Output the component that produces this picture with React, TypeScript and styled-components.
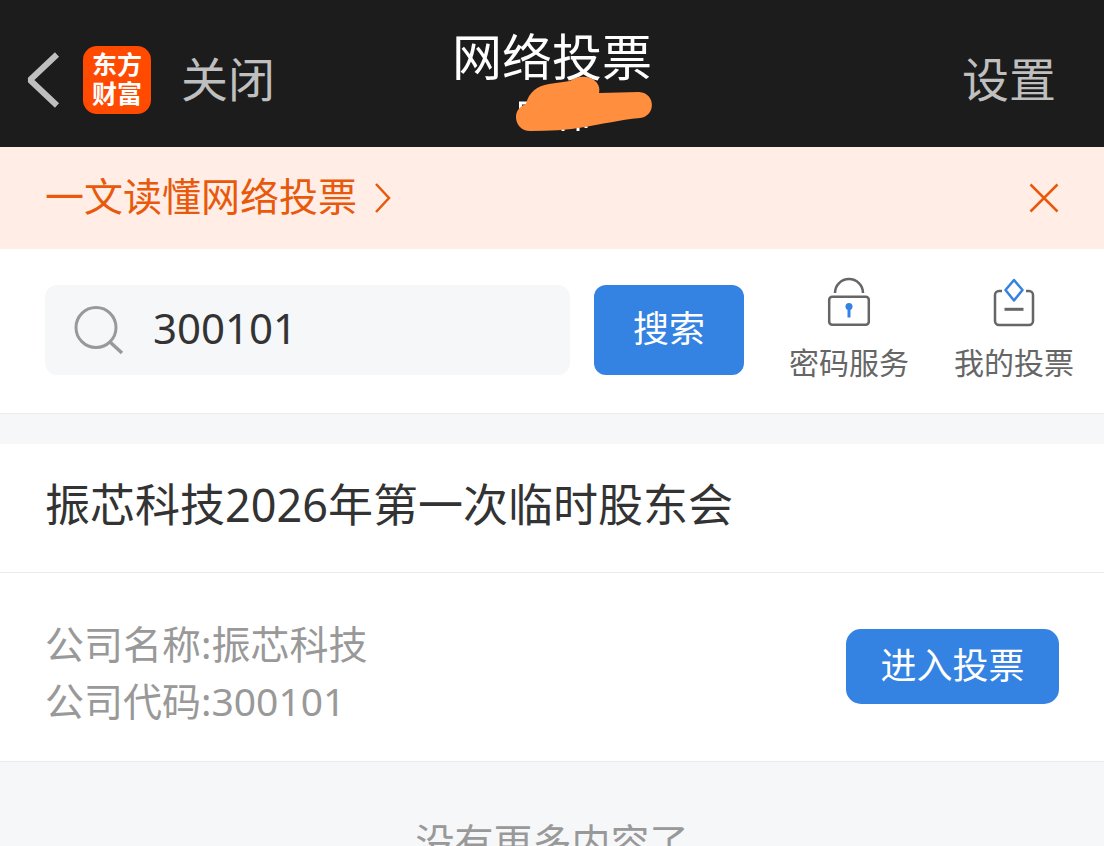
import React, { useState } from 'react';
import styled, { createGlobalStyle } from 'styled-components';

const GlobalStyle = createGlobalStyle`
  *, *::before, *::after { box-sizing: border-box; }
  body {
    margin: 0;
    background: #f6f7f9;
    font-family: "Noto Sans", "Noto Sans CJK SC", sans-serif;
    color: #333;
  }
  html { scrollbar-width: none; }
  h1, h2, p, dl, dd, dt { margin: 0; font-weight: 400; }
  button { border: 0; padding: 0; background: none; font: inherit; color: inherit; cursor: pointer; }
  a { color: inherit; text-decoration: none; }
  svg { display: block; flex: none; }
`;

const Header = styled.header`
  display: grid;
  grid-template-columns: 1fr auto 1fr;
  height: 147px;
  background: #1c1c1c;
  color: #bfbfbf;
`;

const HeaderSide = styled.div<{ $end?: boolean }>`
  display: flex;
  align-items: center;
  justify-content: ${(p) => (p.$end ? 'flex-end' : 'flex-start')};
  padding: 12px ${(p) => (p.$end ? '48px 0 0' : '0 0 24px')};
`;

const HeaderText = styled.button`
  padding-bottom: 2px;
  font-size: 47px;
  line-height: 60px;
`;

const BackButton = styled.button`
  margin-right: 20px;
`;

const Logo = styled.div`
  display: flex;
  flex-direction: column;
  align-items: center;
  justify-content: center;
  width: 68px;
  height: 68px;
  margin-right: 30px;
  padding-bottom: 4px;
  border-radius: 14px;
  background: #ff4a00;
  color: #fff;
  font: 700 25px/29px "Noto Sans CJK SC", sans-serif;
`;

const TitleBlock = styled.div`
  display: flex;
  flex-direction: column;
  align-items: center;
  padding-top: 25px;
`;

const Title = styled.h1`
  color: #fff;
  font-size: 50px;
  line-height: 64px;
`;

const Scribble = styled.svg`
  margin-top: -15px;
  margin-left: 64px;
`;

const Banner = styled.div`
  display: flex;
  align-items: center;
  justify-content: space-between;
  height: 102px;
  padding: 0 44px 0 45px;
  background: #ffede6;
  color: #e8590c;
`;

const BannerLink = styled.a`
  display: flex;
  align-items: center;
  gap: 16px;
  font-size: 39px;
  line-height: 56px;
`;

const BannerText = styled.span`
  padding-bottom: 4px;
`;

const SearchBar = styled.form`
  display: flex;
  align-items: flex-start;
  height: 165px;
  padding: 28px 30px 0 45px;
  background: #fff;
  border-bottom: 1px solid #e9eaec;
`;

const SearchField = styled.label`
  display: flex;
  flex: 1;
  align-items: center;
  min-width: 0;
  height: 90px;
  margin: 8px 24px 0 0;
  padding-left: 29px;
  gap: 29px;
  border-radius: 12px;
  background: #f6f7f9;
`;

const SearchInput = styled.input`
  flex: 1;
  min-width: 0;
  height: 86px;
  padding: 0 0 6px;
  border: 0;
  outline: 0;
  background: transparent;
  color: #333;
  font: 400 42px "Noto Sans", "Noto Sans CJK SC", sans-serif;
`;

const PrimaryButton = styled.button<{ $large?: boolean }>`
  flex: none;
  width: ${(p) => (p.$large ? 150 : 213)}px;
  height: ${(p) => (p.$large ? 90 : 75)}px;
  margin-top: ${(p) => (p.$large ? 8 : 0)}px;
  padding-bottom: 2px;
  border-radius: ${(p) => (p.$large ? 12 : 15)}px;
  background: #3482e2;
  color: #fff;
  font-size: 36px;
  line-height: 48px;
`;

const Shortcuts = styled.nav`
  display: flex;
  gap: 45px;
  margin-left: 45px;
`;

const Shortcut = styled.a`
  display: flex;
  flex-direction: column;
  align-items: center;
  gap: 14px;
  color: #666;
  font-size: 30px;
  line-height: 40px;
`;

const Card = styled.section`
  margin-top: 30px;
  background: #fff;
  border-bottom: 1px solid #e9eaec;
`;

const CardTitle = styled.h2`
  padding: 29px 45px 35px;
  border-bottom: 1px solid #e9eaec;
  font-size: 45px;
  line-height: 64px;
`;

const CardBody = styled.div`
  display: flex;
  align-items: flex-start;
  justify-content: space-between;
  padding: 42px 45px 32px;
`;

const Details = styled.dl`
  color: #999;
  font-size: 39px;
  line-height: 57px;
`;

const Detail = styled.div`
  display: flex;
`;

const Action = styled.div`
  padding-top: 14px;
`;

const EndNote = styled.p`
  height: 84px;
  padding-top: 52px;
  overflow: hidden;
  color: #999;
  font-size: 39px;
  line-height: 56px;
  text-align: center;
`;

const LockIcon = () => (
  <svg width="48" height="52" viewBox="0 0 48 52" fill="none" stroke="#666" strokeWidth="2.5">
    <path d="M10 16a14 14 0 0 1 28 0" />
    <rect x="4.2" y="19.8" width="39.6" height="28" rx="3" />
    <circle cx="24" cy="29.5" r="3.5" fill="#3482e2" stroke="none" />
    <path d="M24 30v10.500" stroke="#3482e2" strokeWidth="3" />
  </svg>
);

const BallotIcon = () => (
  <svg width="48" height="52" viewBox="0 0 48 52" fill="none" stroke="#666" strokeWidth="2.5">
    <path d="M12 14H9a4 4 0 0 0-4 4v26a4 4 0 0 0 4 4h30a4 4 0 0 0 4-4V18a4 4 0 0 0-4-4h-3" />
    <path d="M14.500 32.300h19" strokeWidth="3" />
    <path d="M24 3 32.500 13 24 23.500 15.500 13Z" stroke="#3482e2" strokeWidth="2.5" strokeLinejoin="round" />
  </svg>
);

export default function App() {
  const [code, setCode] = useState('300101');
  const [bannerOpen, setBannerOpen] = useState(true);
  return (
    <>
      <GlobalStyle />
      <Header>
        <HeaderSide>
          <BackButton aria-label="返回">
            <svg width="39" height="58" viewBox="0 0 39 58" fill="none" stroke="#bfbfbf" strokeWidth="6">
              <path d="M33 3.500 6 29 33 54.500" strokeLinejoin="bevel" />
            </svg>
          </BackButton>
          <Logo>
            <span>东方</span>
            <span>财富</span>
          </Logo>
          <HeaderText>关闭</HeaderText>
        </HeaderSide>
        <TitleBlock>
          <Title>网络投票</Title>
          <Scribble width="138" height="60" viewBox="0 0 138 60" aria-hidden="true">
            <path d="M5.500 36V29H12M48 53v4M63 52v5M71 50v4" fill="none" stroke="#fff" strokeWidth="3" />
            <path
              d="M15 57C7 57 1 51 1 43C1 37 5 32 11 30C14 18 22 12 34 10L55 7C62 2 72 1 79 6C84 10 85 14 84 19L124 18C141 19 141 42 125 44C104 46 88 50 70 53C52 56 34 57 15 57Z"
              fill="#ff8f3f"
            />
          </Scribble>
        </TitleBlock>
        <HeaderSide $end>
          <HeaderText>设置</HeaderText>
        </HeaderSide>
      </Header>
      {bannerOpen && (
        <Banner>
          <BannerLink href="#guide">
            <BannerText>一文读懂网络投票</BannerText>
            <svg width="20" height="32" viewBox="0 0 20 32" fill="none" stroke="currentColor" strokeWidth="2.5">
              <path d="M3 2 16 16 3 30" />
            </svg>
          </BannerLink>
          <button aria-label="关闭提示" onClick={() => setBannerOpen(false)}>
            <svg width="32" height="32" viewBox="0 0 32 32" fill="none" stroke="currentColor" strokeWidth="2.5">
              <path d="M2.500 2.500 29.500 29.500M29.500 2.500 2.500 29.500" />
            </svg>
          </button>
        </Banner>
      )}
      <SearchBar onSubmit={(e) => e.preventDefault()}>
        <SearchField>
          <svg width="50" height="50" viewBox="0 0 50 50" fill="none" stroke="#999" strokeWidth="3">
            <circle cx="22" cy="22.500" r="20" />
            <path d="M36 37 48 48" strokeWidth="3.500" />
          </svg>
          <SearchInput aria-label="股票代码" value={code} onChange={(e) => setCode(e.target.value)} />
        </SearchField>
        <PrimaryButton $large type="submit">搜索</PrimaryButton>
        <Shortcuts>
          <Shortcut href="#password">
            <LockIcon />
            密码服务
          </Shortcut>
          <Shortcut href="#votes">
            <BallotIcon />
            我的投票
          </Shortcut>
        </Shortcuts>
      </SearchBar>
      <Card>
        <CardTitle>振芯科技2026年第一次临时股东会</CardTitle>
        <CardBody>
          <Details>
            <Detail>
              <dt>公司名称:</dt>
              <dd>振芯科技</dd>
            </Detail>
            <Detail>
              <dt>公司代码:</dt>
              <dd>300101</dd>
            </Detail>
          </Details>
          <Action>
            <PrimaryButton>进入投票</PrimaryButton>
          </Action>
        </CardBody>
      </Card>
      <EndNote>没有更多内容了</EndNote>
    </>
  );
}
